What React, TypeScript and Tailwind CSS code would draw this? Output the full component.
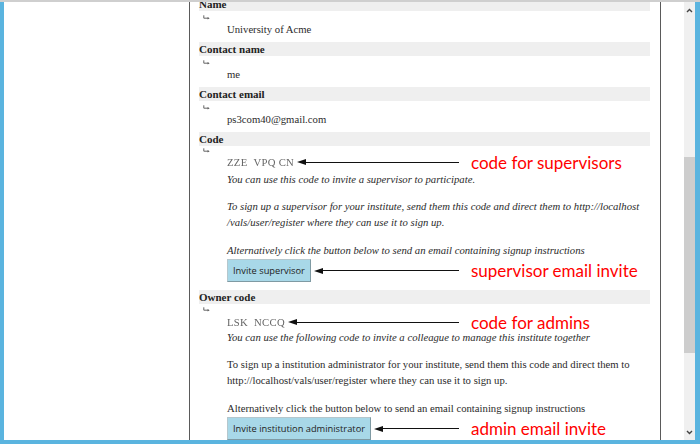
import React from "react";

const serif = { fontFamily: '"Liberation Serif", "DejaVu Serif", serif' };
const sans = { fontFamily: '"Open Sans", "Liberation Sans", sans-serif' };
const label = { fontFamily: 'Lato, "Open Sans", sans-serif' };

function Hook({ h }: { h: string }) {
  return (
    <div className={`${h} pl-[4px] flex items-center`}>
      <svg width="7" height="5" viewBox="0 0 7 5">
        <path d="M0.8 0.3 V3.2 H5" fill="none" stroke="#555" strokeWidth="0.9" />
        <polygon points="6.6,3.2 4.6,2 4.6,4.4" fill="#555" />
      </svg>
    </div>
  );
}

function Arrow() {
  return (
    <div className="flex-1 flex items-center ml-[3px]">
      <svg width="9" height="6" viewBox="0 0 9 6" className="shrink-0">
        <polygon points="0,3 9,0 9,6" fill="#111" />
      </svg>
      <div className="flex-1 h-px bg-[#111]" />
    </div>
  );
}

function Annotated({ children, text, h }: { children: React.ReactNode; text: string; h: string }) {
  return (
    <div className={`grid grid-cols-[232px_auto] items-center ${h}`}>
      <div className="flex items-center">
        {children}
        <Arrow />
      </div>
      <div className="pl-[12px] text-[17px] leading-none text-[#ff0000] whitespace-nowrap" style={label}>
        {text}
      </div>
    </div>
  );
}

function Header({ children }: { children: React.ReactNode }) {
  return (
    <div className="h-[14px] bg-[#efefef] flex items-center font-bold text-[11px] text-[#222] leading-none">
      {children}
    </div>
  );
}

function Field({ title, value }: { title: string; value: string }) {
  return (
    <div className="mb-[7px]">
      <Header>{title}</Header>
      <Hook h="h-[12px]" />
      <div className="h-[12px] pl-[28px] flex items-center text-[10.7px] leading-none text-[#2b2b2b]">{value}</div>
    </div>
  );
}

function Button({ children }: { children: React.ReactNode }) {
  return (
    <div
      className="h-[23px] px-[5px] flex items-center bg-[#a8d8e8] border border-[#b5c7cd] border-r-[#7f9aa3] border-b-[#7f9aa3] text-[9.3px] text-[#222] whitespace-nowrap"
      style={sans}
    >
      {children}
    </div>
  );
}

export default function App() {
  return (
    <div className="w-[700px] h-[444px] overflow-hidden bg-white flex flex-col">
      <div className="h-[2px] bg-[#cfcfcf] shrink-0" />
      <div className="flex-1 flex min-h-0 border-l-[4px] border-r-[5px] border-b-[4px] border-[#5ab4df]">
        <div className="w-[186px] shrink-0 border-r border-[#5a5a5a]" />
        <div className="w-[471px] shrink-0 border-r border-[#5a5a5a] pl-[9px] pr-[10px] overflow-hidden" style={serif}>
          <div className="mt-[-5px]">
            <Field title="Name" value="University of Acme" />
            <Field title="Contact name" value="me" />
            <Field title="Contact email" value="ps3com40@gmail.com" />

            <Header>Code</Header>
            <Hook h="h-[8px]" />
            <div className="pl-[28px] text-[10.7px] text-[#2b2b2b]">
              <Annotated text="code for supervisors" h="h-[12px]">
                <span className="text-[#666] leading-none tracking-[0.3px] blur-[0.3px]">ZZE&nbsp;&nbsp;VPQ CN</span>
              </Annotated>
              <div className="italic leading-[16px] mt-[5px] whitespace-nowrap">
                <p>You can use this code to invite a supervisor to participate.</p>
                <p className="mt-[11px]">
                  To sign up a supervisor for your institute, send them this code and direct them to http://localhost
                  <br />
                  /vals/user/register where they can use it to sign up.
                </p>
                <p className="mt-[12px]">Alternatively click the button below to send an email containing signup instructions</p>
              </div>
              <div className="mt-[1px]">
                <Annotated text="supervisor email invite" h="h-[23px]">
                  <Button>Invite supervisor</Button>
                </Annotated>
              </div>
            </div>

            <div className="mt-[8px]">
              <Header>Owner code</Header>
              <Hook h="h-[10px]" />
              <div className="pl-[28px] text-[10.7px] text-[#2b2b2b]">
                <Annotated text="code for admins" h="h-[12px]">
                  <span className="text-[#666] leading-none tracking-[0.3px] blur-[0.3px]">LSK&nbsp;&nbsp;NCCQ</span>
                </Annotated>
                <div className="leading-[16px] mt-[3px] whitespace-nowrap">
                  <p className="italic">You can use the following code to invite a colleague to manage this institute together</p>
                  <p className="mt-[11px]">
                    To sign up a institution administrator for your institute, send them this code and direct them to
                    <br />
                    http://localhost/vals/user/register where they can use it to sign up.
                  </p>
                  <p className="mt-[12px]">Alternatively click the button below to send an email containing signup instructions</p>
                </div>
                <div className="mt-[1px]">
                  <Annotated text="admin email invite" h="h-[23px]">
                    <Button>Invite institution administrator</Button>
                  </Annotated>
                </div>
              </div>
            </div>
          </div>
        </div>
        <div className="flex-1" />
        <div className="w-[11px] shrink-0 bg-[#f0f0f0] flex flex-col items-center">
          <div className="h-[16px] flex items-center justify-center">
            <svg width="7" height="5" viewBox="0 0 7 5"><polyline points="1,4 3.5,1.5 6,4" fill="none" stroke="#444" strokeWidth="1.4" /></svg>
          </div>
          <div className="h-[139px]" />
          <div className="w-full h-[196px] bg-[#cdcdcd]" />
          <div className="flex-1" />
          <div className="h-[16px] flex items-center justify-center">
            <svg width="7" height="5" viewBox="0 0 7 5"><polyline points="1,1 3.5,3.5 6,1" fill="none" stroke="#444" strokeWidth="1.4" /></svg>
          </div>
        </div>
      </div>
    </div>
  );
}
